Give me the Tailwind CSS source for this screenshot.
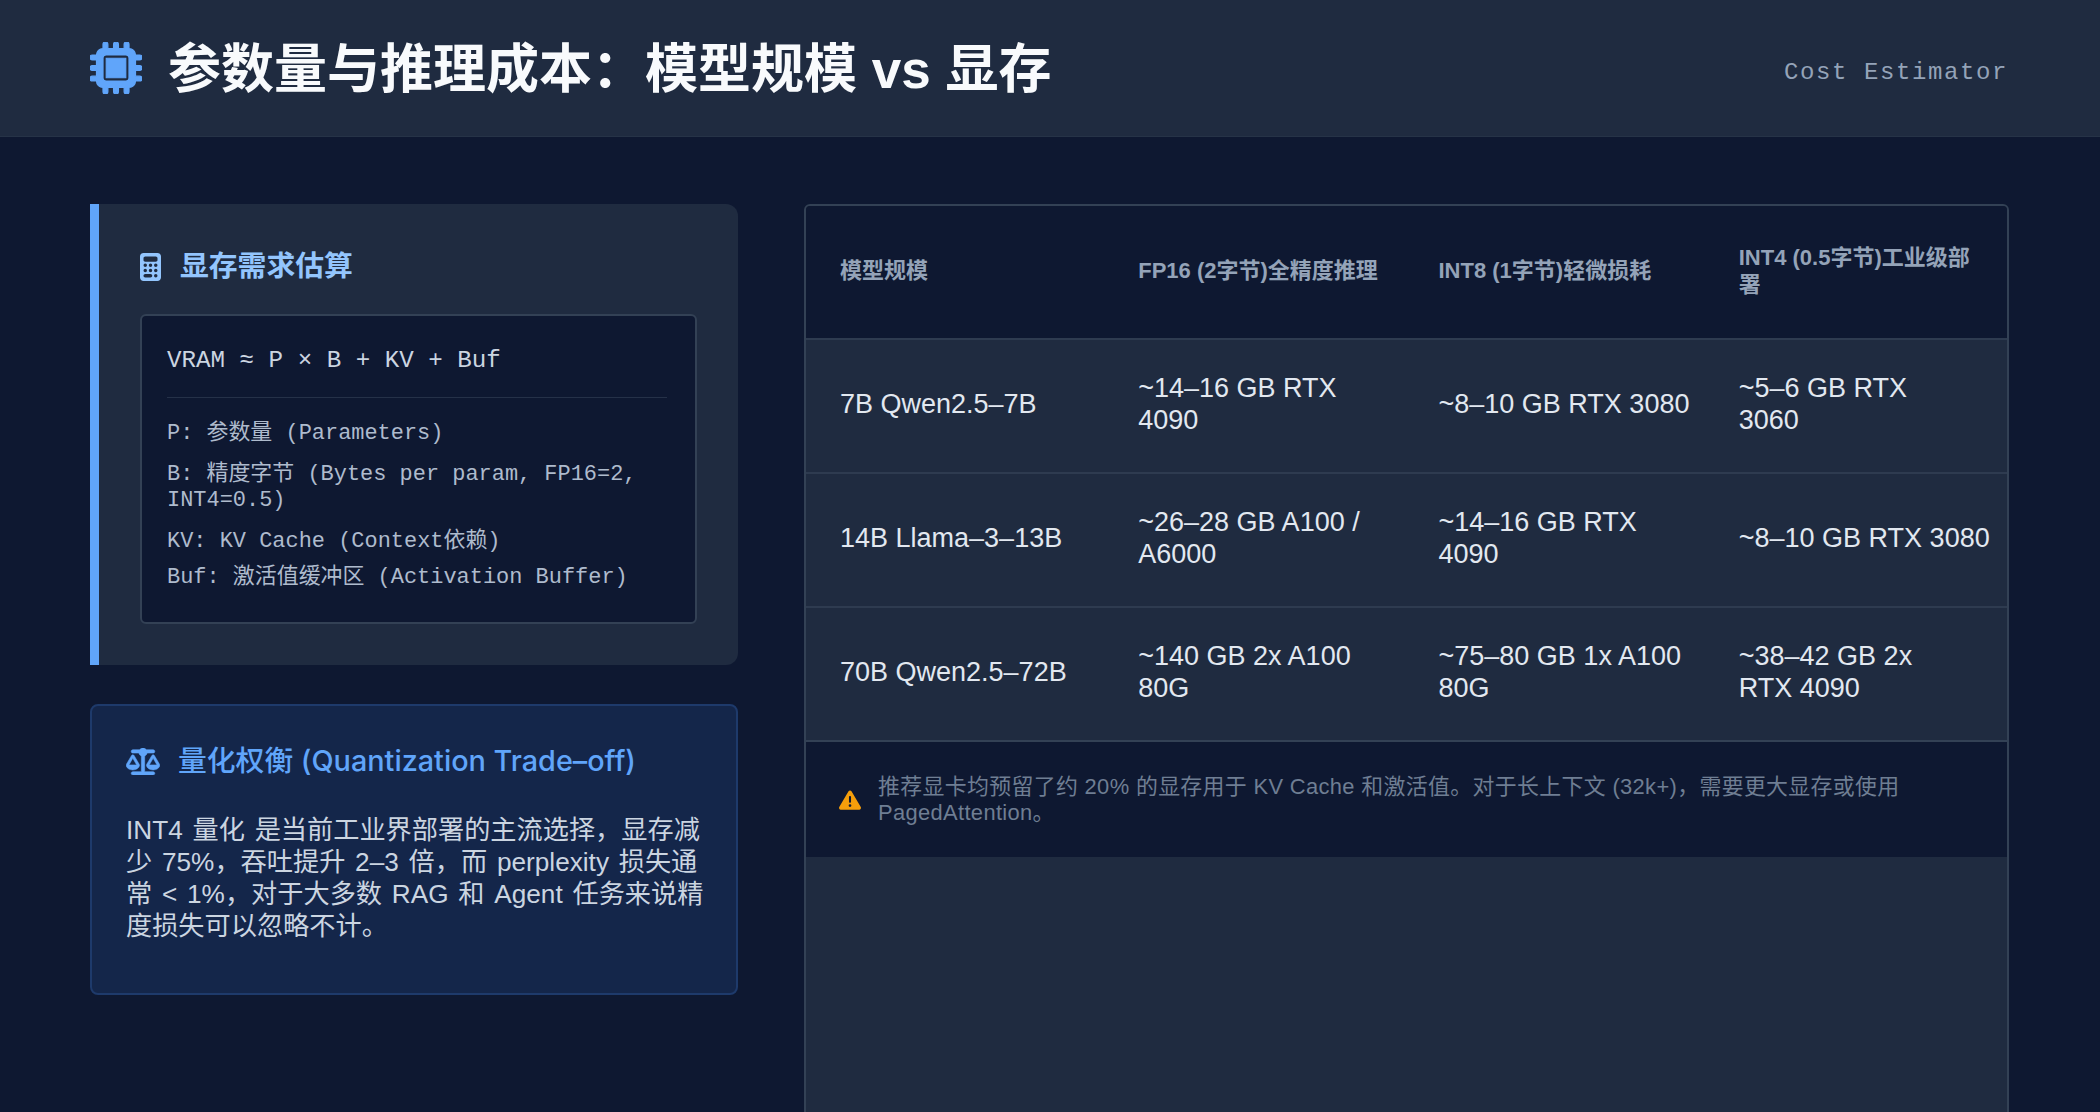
<!doctype html>
<html lang="zh-CN">
  <head>
    <meta charset="UTF-8" />
    <title>参数量与推理成本</title>
    <script src="https://cdn.jsdelivr.net/npm/@tailwindcss/browser@4"></script>
  </head>

  <body class="h-screen overflow-hidden bg-[#0e1831] font-['Liberation_Sans','Noto_Sans_CJK_SC',sans-serif]">
    <!-- HEADER -->
    <header class="h-[137px] pl-[90px] pr-[92px] flex items-center justify-between bg-[#1f2b40] border-b border-[#263347]">
      <div class="flex items-center gap-[26px]">
        <svg class="w-[52px] h-[52px] text-[#60a5fa]" viewBox="0 0 512 512" fill="currentColor" stroke="currentColor" stroke-width="12"><path d="M176 24c0-13.3-10.7-24-24-24s-24 10.7-24 24V64c-35.3 0-64 28.7-64 64H24c-13.3 0-24 10.7-24 24s10.7 24 24 24H64v56H24c-13.3 0-24 10.7-24 24s10.7 24 24 24H64v56H24c-13.3 0-24 10.7-24 24s10.7 24 24 24H64c0 35.3 28.7 64 64 64v40c0 13.3 10.7 24 24 24s24-10.7 24-24V448h56v40c0 13.3 10.7 24 24 24s24-10.7 24-24V448h56v40c0 13.3 10.7 24 24 24s24-10.7 24-24V448c35.3 0 64-28.7 64-64h40c13.3 0 24-10.7 24-24s-10.7-24-24-24H448V280h40c13.3 0 24-10.7 24-24s-10.7-24-24-24H448V176h40c13.3 0 24-10.7 24-24s-10.7-24-24-24H448c0-35.3-28.7-64-64-64V24c0-13.3-10.7-24-24-24s-24 10.7-24 24V64H280V24c0-13.3-10.7-24-24-24s-24 10.7-24 24V64H176V24zM160 128H352c17.7 0 32 14.3 32 32V352c0 17.7-14.3 32-32 32H160c-17.7 0-32-14.3-32-32V160c0-17.7 14.3-32 32-32zm192 32H160V352H352V160z"/></svg>
        <h1 class="mt-[2px] text-[53px] leading-none font-bold text-[#f8fafc]">参数量与推理成本：模型规模 vs 显存</h1>
      </div>
      <span class="mt-[10px] font-['Liberation_Mono',monospace] text-[24px] tracking-[1.6px] text-[#94a3b8]">Cost Estimator</span>
    </header>

    <main class="px-[90px] pt-[67px] grid grid-cols-[648px_1205px] gap-x-[66px] items-start">
      <!-- LEFT COLUMN -->
      <div>
        <section class="border-l-[9px] border-[#60a5fa] bg-[#1f2b40] rounded-r-xl pl-[41px] pr-[41px] pt-[43px] pb-[41px]">
          <h2 class="h-[40px] flex items-center gap-[19px] text-[28.8px] font-bold text-[#93c5fd]">
            <svg class="w-[21px] h-[28px]" viewBox="0 0 384 512" fill="currentColor"><path d="M64 0C28.7 0 0 28.7 0 64V448c0 35.3 28.7 64 64 64H320c35.3 0 64-28.7 64-64V64c0-35.3-28.7-64-64-64H64zM96 64H288c17.7 0 32 14.3 32 32v32c0 17.7-14.3 32-32 32H96c-17.7 0-32-14.3-32-32V96c0-17.7 14.3-32 32-32zm32 160a32 32 0 1 1 -64 0 32 32 0 1 1 64 0zM96 352a32 32 0 1 1 0-64 32 32 0 1 1 0 64zM64 416c0-17.7 14.3-32 32-32h96c17.7 0 32 14.3 32 32s-14.3 32-32 32H96c-17.7 0-32-14.3-32-32zM192 256a32 32 0 1 1 0-64 32 32 0 1 1 0 64zm32 64a32 32 0 1 1 -64 0 32 32 0 1 1 64 0zm64-64a32 32 0 1 1 0-64 32 32 0 1 1 0 64zm32 64a32 32 0 1 1 -64 0 32 32 0 1 1 64 0zM288 448a32 32 0 1 1 0-64 32 32 0 1 1 0 64z"/></svg>
            显存需求估算
          </h2>
          <div class="mt-[27px] bg-[#0e1831] border-2 border-[#334155] rounded-md px-[25px] pt-[30px] pb-[31px] font-['Liberation_Mono','Noto_Sans_CJK_SC',monospace] text-[#aebbcd]">
            <div class="h-[30px] leading-[30px] text-[24.2px] text-[#cbd5e1]">VRAM ≈ P × B + KV + Buf</div>
            <div class="mt-[21px] mr-[3px] border-t border-[#253148]"></div>
            <p class="mt-[23px] text-[21.95px] leading-[26px]">P: 参数量 (Parameters)</p>
            <p class="mt-[15px] text-[21.95px] leading-[26px] whitespace-nowrap">B: 精度字节 (Bytes per param, FP16=2,<br />INT4=0.5)</p>
            <p class="mt-[15px] text-[21.95px] leading-[26px]">KV: KV Cache (Context依赖)</p>
            <p class="mt-[10px] text-[21.95px] leading-[26px]">Buf: 激活值缓冲区 (Activation Buffer)</p>
          </div>
        </section>

        <section class="mt-[39px] bg-[#14264a] border-2 border-[#1e3a6b] rounded-lg px-[34px] pt-[35px] pb-[51px]">
          <h2 class="h-[40px] flex items-center gap-[18px] text-[28.8px] font-medium text-[#60a5fa] whitespace-nowrap font-['Inter','Noto_Sans_CJK_SC',sans-serif]">
            <svg class="w-[34px] h-[27px]" viewBox="0 0 640 512" fill="currentColor" stroke="currentColor" stroke-width="10"><path d="M384 32H512c17.7 0 32 14.3 32 32s-14.3 32-32 32H398.4c-5.2 25.8-22.9 47.1-46.4 57.3V448H512c17.7 0 32 14.3 32 32s-14.3 32-32 32H320 128c-17.7 0-32-14.3-32-32s14.3-32 32-32H288V153.3c-23.5-10.3-41.2-31.6-46.4-57.3H128c-17.7 0-32-14.3-32-32s14.3-32 32-32H256c14.6-19.4 37.8-32 64-32s49.4 12.6 64 32zm55.6 288H584.4L512 195.8 439.6 320zM512 416c-62.9 0-115.2-34-126-78.9c-2.6-11 1-22.3 6.7-32.1l95.2-163.2c5-8.6 14.2-13.8 24.1-13.8s19.1 5.3 24.1 13.8l95.2 163.2c5.7 9.8 9.3 21.1 6.7 32.1C627.2 382 574.9 416 512 416zM126.8 195.8L54.4 320H199.3L126.8 195.8zM.9 337.1c-2.6-11 1-22.3 6.7-32.1l95.2-163.2c5-8.6 14.2-13.8 24.1-13.8s19.1 5.3 24.1 13.8l95.2 163.2c5.7 9.8 9.3 21.1 6.7 32.1C242 382 189.7 416 126.8 416S11.7 382 .9 337.1z"/></svg>
            <span>量化权衡 (Quantization Trade–off)</span>
          </h2>
          <p class="mt-[33px] text-[26.2px] [word-spacing:2.5px] leading-[32px] text-[#cbd5e1] whitespace-nowrap">INT4 量化 是当前工业界部署的主流选择，显存减<br />少 75%，吞吐提升 2–3 倍，而 perplexity 损失通<br />常 &lt; 1%，对于大多数 RAG 和 Agent 任务来说精<br />度损失可以忽略不计。</p>
        </section>
      </div>

      <!-- RIGHT COLUMN -->
      <div class="h-[960px] bg-[#1f2b40] border-2 border-[#334155] rounded-md overflow-hidden">
        <table class="w-full table-fixed text-left">
          <thead class="bg-[#0e1831] text-[#94a3b8] text-[22px] leading-[27px]">
            <tr class="border-b-2 border-[#2e3b50]">
              <th class="h-[133px] pl-[34px] pb-[3px] font-semibold">模型规模</th>
              <th class="h-[133px] pl-[32px] pb-[3px] font-semibold">FP16 (2字节)全精度推理</th>
              <th class="h-[133px] pl-[32px] pb-[3px] font-semibold">INT8 (1字节)轻微损耗</th>
              <th class="h-[133px] pl-[32px] pb-[3px] font-semibold">INT4 (0.5字节)工业级部<br />署</th>
            </tr>
          </thead>
          <tbody class="text-[27px] leading-[32px] text-[#e2e8f0]">
            <tr class="border-b-2 border-[#2e3b50]">
              <td class="h-[134px] pl-[34px] pb-[5px] whitespace-nowrap">7B Qwen2.5–7B</td>
              <td class="h-[134px] pl-[32px] pb-[5px] whitespace-nowrap">~14–16 GB RTX<br />4090</td>
              <td class="h-[134px] pl-[32px] pb-[5px] whitespace-nowrap">~8–10 GB RTX 3080</td>
              <td class="h-[134px] pl-[32px] pb-[5px] whitespace-nowrap">~5–6 GB RTX<br />3060</td>
            </tr>
            <tr class="border-b-2 border-[#2e3b50]">
              <td class="h-[134px] pl-[34px] pb-[5px] whitespace-nowrap">14B Llama–3–13B</td>
              <td class="h-[134px] pl-[32px] pb-[5px] whitespace-nowrap">~26–28 GB A100 /<br />A6000</td>
              <td class="h-[134px] pl-[32px] pb-[5px] whitespace-nowrap">~14–16 GB RTX<br />4090</td>
              <td class="h-[134px] pl-[32px] pb-[5px] whitespace-nowrap">~8–10 GB RTX 3080</td>
            </tr>
            <tr class="border-b-2 border-[#334155]">
              <td class="h-[134px] pl-[34px] pb-[5px] whitespace-nowrap">70B Qwen2.5–72B</td>
              <td class="h-[134px] pl-[32px] pb-[5px] whitespace-nowrap">~140 GB 2x A100<br />80G</td>
              <td class="h-[134px] pl-[32px] pb-[5px] whitespace-nowrap">~75–80 GB 1x A100<br />80G</td>
              <td class="h-[134px] pl-[32px] pb-[5px] whitespace-nowrap">~38–42 GB 2x<br />RTX 4090</td>
            </tr>
          </tbody>
        </table>

        <!-- NOTE -->
        <div class="h-[115px] bg-[#0e1831] pl-[32px] pr-[60px] flex items-center gap-[16px]">
          <svg class="w-[24px] h-[22px] shrink-0 text-[#f59e0b]" viewBox="0 0 512 512" fill="currentColor"><path d="M256 32c14.2 0 27.3 7.5 34.5 19.8l216 368c7.3 12.4 7.3 27.7 .2 40.1S486.3 480 472 480H40c-14.3 0-27.6-7.7-34.7-20.1s-7-27.8 .2-40.1l216-368C228.7 39.5 241.8 32 256 32zm0 128c-13.3 0-24 10.7-24 24V296c0 13.3 10.7 24 24 24s24-10.7 24-24V184c0-13.3-10.7-24-24-24zm32 224a32 32 0 1 0 -64 0 32 32 0 1 0 64 0z"/></svg>
          <p class="text-[21.9px] leading-[26px] tracking-[0.35px] text-[#6f7e93]">推荐显卡均预留了约 20% 的显存用于 KV Cache 和激活值。对于长上下文 (32k+)，需要更大显存或使用 PagedAttention。</p>
        </div>
      </div>
    </main>
  </body>
</html>
